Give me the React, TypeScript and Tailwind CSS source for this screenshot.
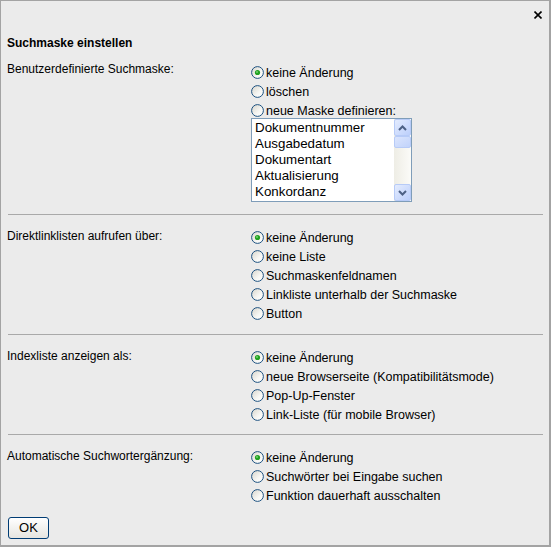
const fieldNames = ["Dokumentnummer", "Ausgabedatum", "Dokumentart", "Aktualisierung", "Konkordanz"];

function Radio({ checked }: { checked?: boolean }) {
  return (
    <svg width="13" height="13" viewBox="0 0 13 13" className="shrink-0">
      <defs>
        <linearGradient id="rg" x1="0" y1="0" x2="1" y2="1">
          <stop offset="0" stopColor="#d6d4cb" />
          <stop offset="0.6" stopColor="#f7f7f4" />
          <stop offset="1" stopColor="#ffffff" />
        </linearGradient>
      </defs>
      <circle cx="6.5" cy="6.5" r="5.9" fill="url(#rg)" stroke="#1c5180" strokeWidth="1" />
      {checked && (
        <>
          <circle cx="6.5" cy="6.5" r="2.6" fill="#21a121" />
          <circle cx="6" cy="6" r="1" fill="#6fd26f" />
        </>
      )}
    </svg>
  );
}

function Option({ label, checked }: { label: string; checked?: boolean }) {
  return (
    <div className="flex h-[19px] items-center">
      <Radio checked={checked} />
      <span className="mt-[2px] ml-[2px] whitespace-nowrap text-[12.5px]">{label}</span>
    </div>
  );
}

function Section({ label, labelPad, children }: { label: string; labelPad: string; children: React.ReactNode }) {
  return (
    <div className="flex pl-[6px]">
      <div className={"w-[244px] leading-[15px] " + labelPad}>{label}</div>
      <div className="pt-[1px]">{children}</div>
    </div>
  );
}

function Separator({ className }: { className: string }) {
  return <div className={"ml-[7px] mr-[6px] h-px bg-[#a9a9a9] " + className} />;
}

function Chevron({ up }: { up?: boolean }) {
  return (
    <svg width="9" height="6" viewBox="0 0 9 6">
      <path
        d={up ? "M1 5 L4.5 1.5 L8 5" : "M1 1 L4.5 4.5 L8 1"}
        fill="none"
        stroke="#4d6185"
        strokeWidth="2"
      />
    </svg>
  );
}

function ScrollButton({ up }: { up?: boolean }) {
  return (
    <div className="flex h-[17px] items-center justify-center rounded-[2px] border border-[#b7cbf7] bg-gradient-to-br from-[#e4ecfe] to-[#bccffb]">
      <Chevron up={up} />
    </div>
  );
}

function FieldList() {
  return (
    <div className="mt-[-2px] flex h-[84px] w-[161px] border border-[#7f9db9] bg-white">
      <div className="flex-1 pt-[1px] pl-[3px] text-[13.33px] leading-[16px]">
        {fieldNames.map((n) => (
          <div key={n}>{n}</div>
        ))}
      </div>
      <div className="flex w-[17px] flex-col bg-gradient-to-r from-[#eeede5] to-[#fbfbf8]">
        <ScrollButton up />
        <div className="h-[12px] rounded-[2px] border border-[#b7cbf7] bg-gradient-to-br from-[#dbe5fd] to-[#c1d3fb]" />
        <div className="flex-1" />
        <ScrollButton />
      </div>
    </div>
  );
}

export default function App() {
  return (
    <div className="h-[547px] w-[551px] border-t border-l border-r-2 border-b-2 border-[#a3a3a3] bg-[#ebebeb] font-['Liberation_Sans',Arial,sans-serif] text-[12px] text-black">
      <div className="flex h-[35px] justify-end pt-[10px] pr-[7px]">
        <svg width="8" height="8" viewBox="0 0 8 8">
          <path d="M0.5 0.5 L7.5 7.5 M7.5 0.5 L0.5 7.5" stroke="#000" strokeWidth="1.6" />
        </svg>
      </div>
      <div className="pl-[6px] font-bold leading-[15px]">Suchmaske einstellen</div>

      <div className="mt-[11px]">
        <Section label="Benutzerdefinierte Suchmaske:" labelPad="pt-0">
          <Option label="keine Änderung" checked />
          <Option label="löschen" />
          <Option label="neue Maske definieren:" />
          <FieldList />
        </Section>
      </div>

      <Separator className="mt-[12px]" />
      <div className="mt-[12px]">
        <Section label="Direktlinklisten aufrufen über:" labelPad="pt-[2px]">
          <Option label="keine Änderung" checked />
          <Option label="keine Liste" />
          <Option label="Suchmaskenfeldnamen" />
          <Option label="Linkliste unterhalb der Suchmaske" />
          <Option label="Button" />
        </Section>
      </div>

      <Separator className="mt-[11px]" />
      <div className="mt-[12px]">
        <Section label="Indexliste anzeigen als:" labelPad="pt-[2px]">
          <Option label="keine Änderung" checked />
          <Option label="neue Browserseite (Kompatibilitätsmode)" />
          <Option label="Pop-Up-Fenster" />
          <Option label="Link-Liste (für mobile Browser)" />
        </Section>
      </div>

      <Separator className="mt-[10px]" />
      <div className="mt-[12px]">
        <Section label="Automatische Suchwortergänzung:" labelPad="pt-[2px]">
          <Option label="keine Änderung" checked />
          <Option label="Suchwörter bei Eingabe suchen" />
          <Option label="Funktion dauerhaft ausschalten" />
        </Section>
      </div>

      <div className="mt-[12px] pl-[7px]">
        <button className="h-[22px] w-[41px] rounded-[3px] border border-[#003c74] bg-gradient-to-b from-[#ffffff] to-[#e6e5e0] text-[13px] leading-[20px]">
          OK
        </button>
      </div>
    </div>
  );
}
